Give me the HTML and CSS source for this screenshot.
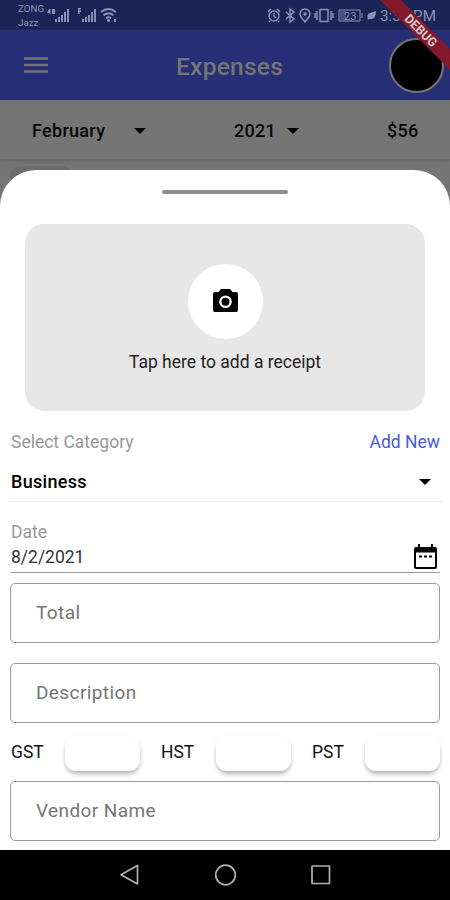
FILE: index.html
```
<!DOCTYPE html>
<html lang="en">
<head>
<meta charset="utf-8">
<title>Expenses</title>
<link rel="stylesheet" href="styles.css">
</head>
<body>
<div class="phone">
  <header class="status">
    <div class="carriers"><span>ZONG</span><span>Jazz</span></div>
    <svg class="signals" width="75" height="30" viewBox="0 0 75 30" fill="currentColor">
      <path d="M1 13l2-4h1.500v5H3.500v-1zM6 9h3v5H6zM9 19h2v3H9zM12 17h2v5h-2zM15 15h2v7h-2zM18 12h2v10h-2zM21 9h2v13h-2z"/>
      <path d="M32 8h3v1.500h-1.500v1H35V12h-1.500v2H32zM36 19h2v3h-2zM39 17h2v5h-2zM42 15h2v7h-2zM45 12h2v10h-2zM48 9h2v13h-2z"/>
      <path d="M55 12q7.500-6 15 0M57.500 15.200q5-4 10 0M60 18.200q2.500-2 5 0" fill="none" stroke="currentColor" stroke-width="2"/>
      <circle cx="62.500" cy="20.500" r="1.600"/><path d="M68 19h2v3h-2z"/>
    </svg>
    <svg class="system" width="113" height="30" viewBox="0 0 113 30" fill="none" stroke="currentColor" stroke-width="1.500">
      <circle cx="8" cy="16" r="5"/><path d="M8 13v3l2 2M2 12l3-3M14 12l-3-3M4 21l-1 1M12 21l1 1"/>
      <path d="M20 12l8 7-4 3V9l4 3-8 7" stroke-width="1.500"/>
      <path d="M39 22c-3-4-5-5-5-8a5 5 0 0 1 10 0c0 3-2 4-5 8z"/><circle cx="39" cy="14" r="1" fill="currentColor"/>
      <path d="M54 9.500h8v12h-8zM51 11v9M65 11v9M49 13v5M67 13v5"/>
      <path d="M73 10h21v11H73zM96 13v5" stroke-width="1"/>
      <rect x="74" y="11" width="6" height="9" fill="currentColor" stroke="none" opacity=".4"/>
      <text class="battery" x="78" y="19.500">23</text>
      <path d="M102 20q-2-6 2-7l6-2q0 7-4 8l-3 0-2 2" fill="currentColor" stroke="none"/>
    </svg>
    <span class="clock">3:31 PM</span>
  </header>
  <div class="appbar">
    <svg class="menu" width="24" height="18" viewBox="0 0 24 18"><path d="M0 2.500h24M0 9h24M0 15.500h24" stroke="#757575" stroke-width="2.600"/></svg>
    <h1>Expenses</h1>
    <div class="avatar"></div>
  </div>
  <div class="filters">
    <span class="month">February</span><i class="caret"></i>
    <span class="year">2021</span><i class="caret"></i>
    <span class="amount">$56</span>
  </div>
  <div class="backdrop"><div class="chip"></div></div>
  <main class="sheet">
    <div class="handle"></div>
    <section class="receipt">
      <div class="camera">
        <svg width="25" height="23" viewBox="0 0 25 23"><path fill="#000" fill-rule="evenodd" d="M8 0h9l2.500 3H23q2 0 2 2v16q0 2-2 2H2q-2 0-2-2V5q0-2 2-2h3.500zM12.500 6.500a6.300 6.300 0 1 0 0 12.600 6.300 6.300 0 0 0 0-12.600z"/><circle cx="12.500" cy="12.800" r="4"/></svg>
      </div>
      <p>Tap here to add a receipt</p>
    </section>
    <div class="row category"><span class="label">Select Category</span><a class="add">Add New</a></div>
    <div class="row select"><span>Business</span><i class="caret"></i></div>
    <div class="row date">
      <div class="stack"><span class="label">Date</span><span class="value">8/2/2021</span></div>
      <svg width="23" height="25" viewBox="0 0 23 25"><path d="M4 0h2v3h11V0h2v3h2q2 0 2 2v18q0 2-2 2H2q-2 0-2-2V5q0-2 2-2h2zM2 8.500V23h19V8.500z" fill-rule="evenodd"/><path d="M5 11.500h3v2H5zM10 11.500h3v2h-3zM15 11.500h3v2h-3z"/></svg>
    </div>
    <div class="field total">Total</div>
    <div class="field description">Description</div>
    <div class="taxes">
      <span>GST</span><div class="tax"></div>
      <span>HST</span><div class="tax"></div>
      <span>PST</span><div class="tax"></div>
    </div>
    <div class="field vendor">Vendor Name</div>
  </main>
  <nav class="nav">
    <svg width="212" height="24" viewBox="0 0 212 24" fill="none" stroke="#b0b0b0" stroke-width="1.700" stroke-linejoin="round"><path d="M18.500 2.500v18.500L2 11.700z"/><circle cx="106.500" cy="12" r="9.800"/><rect x="193" y="3" width="17.500" height="17.500"/></svg>
  </nav>
  <div class="ribbon">DEBUG</div>
</div>
</body>
</html>
```
FILE: styles.css
```
* { box-sizing: border-box; }
body { margin: 0; font-family: Roboto, sans-serif; font-size: 17.5px; color: #111; }
.phone { position: relative; width: 450px; height: 900px; overflow: hidden; display: flex; flex-direction: column; background: #757575; }
.status { height: 30px; flex: none; display: flex; align-items: center; background: #1b2456; color: #8b91b5; }
.carriers { width: 46px; padding-left: 18px; display: flex; flex-direction: column; font-size: 9.8px; line-height: 13.5px; padding-top: 1px; }
.signals { flex: none; }
.system { margin-left: 145px; flex: none; }
.battery { font-size: 11px; fill: currentColor; stroke: none; }
.clock { margin-left: 1px; font-size: 15.2px; line-height: 30px; padding-top: 2px; white-space: nowrap; }
.appbar { height: 70px; flex: none; display: flex; align-items: center; background: #262f75; padding-left: 24px; }
.menu { flex: none; }
h1 { width: 108px; margin: 3px 0 0 128px; font-size: 24.5px; line-height: 30px; font-weight: 500; letter-spacing: .25px; color: #757575; white-space: nowrap; }
.avatar { width: 55px; height: 55px; margin-left: 105px; margin-top: 1px; flex: none; border: 2px solid #757575; border-radius: 50%; background: #000; }
.filters { height: 60px; flex: none; display: flex; align-items: center; padding: 1px 0 0 32px; background: #757575; border-bottom: 1px solid #666; box-shadow: 0 1px 3px #5558; font-size: 18px; font-weight: 500; color: #080808; letter-spacing: .3px; }
.caret { width: 0; height: 0; border: 6px solid transparent; border-top-color: #000; border-bottom: 0; margin-top: 1px; }
.month { width: 102px; }
.year { width: 53px; margin-left: 88px; }
.amount { margin-left: 88px; }
.backdrop { height: 10px; flex: none; padding: 6px 0 0 10px; }
.chip { width: 62px; height: 20px; border-radius: 10px; background: #6c6c6c; }
.sheet { position: relative; height: 680px; flex: none; display: flex; flex-direction: column; padding: 20px 10px 0; background: #fff; border-radius: 36px 36px 0 0; }
.handle { width: 126px; height: 4px; flex: none; align-self: center; border-radius: 2px; background: #8c8c8c; }
.receipt { height: 187px; flex: none; margin: 30px 15px 0; display: flex; flex-direction: column; align-items: center; padding-top: 40px; background: #e7e7e7; border-radius: 19px; }
.camera { width: 75px; height: 75px; display: flex; align-items: center; justify-content: center; padding-bottom: 2px; border-radius: 50%; background: #fff; }
p { margin: 12px 0 0; line-height: 22px; color: #222; }
.row { display: flex; justify-content: space-between; flex: none; }
.label { color: #999; }
.category { height: 41px; align-items: center; margin-top: 10px; padding-left: 1px; }
.add { color: #475bdf; }
.select { height: 40px; margin: 0 -3px 0 -2px; padding: 0 12px 0 3px; align-items: center; border-bottom: 1px solid #eee; font-size: 18px; font-weight: 500; letter-spacing: .3px; color: #000; }
.date { height: 71px; margin-left: 1px; padding: 18px 3px 0 0; border-bottom: 1px solid #999; }
.stack { display: flex; flex-direction: column; line-height: 25px; }
.value { color: #333; }
.date svg { margin-top: 24px; }
.field { height: 60px; flex: none; display: flex; align-items: center; padding: 0 0 2px 25px; border: 1px solid #999; border-radius: 5px; color: #757575; font-size: 19px; letter-spacing: .4px; }
.total { margin-top: 10px; }
.description { margin-top: 20px; }
.taxes { flex: none; display: grid; grid-template-columns: 54px 96px 55px 94px 53px 75px; align-items: center; height: 35px; margin: 13px 0 10px; padding-left: 1px; }
.taxes { grid-template-columns: 54px 96px 55px 96px 53px 75px; }
.taxes span { margin-top: -3px; }
.tax { width: 75px; height: 35px; background: #fff; border-radius: 11px; box-shadow: 0 4px 5px -1px #0004, 0 1px 4px #0001; }
.nav { height: 50px; flex: none; background: #000; display: flex; align-items: center; justify-content: center; }
.ribbon { position: absolute; left: 361px; top: 23px; width: 120px; height: 15px; line-height: 15px; transform: rotate(45deg); background: #85192c; color: #d5c9cf; font-size: 12.5px; font-weight: 700; text-align: center; }
```
